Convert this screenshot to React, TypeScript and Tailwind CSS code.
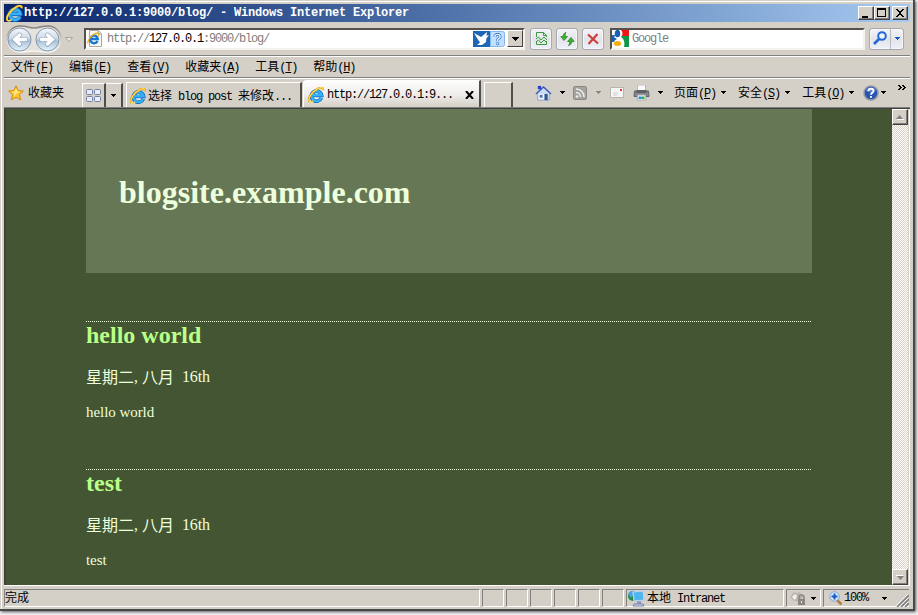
import React from "react";

const latin = "font-['Liberation_Mono','Noto_Sans_CJK_SC',monospace] text-[12px] tracking-[-1.2px]";
const cjk = "font-['Noto_Sans_CJK_SC',sans-serif] text-[12px] tracking-normal";

function Label({ text, className = "" }: { text: string; className?: string }) {
  const parts = text.split(/([\u3000-\u9fff]+|_[A-Z])/).filter(Boolean);
  return (
    <span className={`whitespace-pre leading-[14px] ${latin} ${className}`}>
      {parts.map((p, i) =>
        /[\u3000-\u9fff]/.test(p) ? (
          <span key={i} className={cjk}>{p}</span>
        ) : p[0] === "_" ? (
          <span key={i} className="underline underline-offset-1">{p[1]}</span>
        ) : (
          <span key={i}>{p}</span>
        ),
      )}
    </span>
  );
}

function Down({ className = "" }: { className?: string }) {
  return (
    <svg width="5" height="3" className={`shrink-0 ${className}`} fill="currentColor" shapeRendering="crispEdges">
      <path d="M0 0h5v1H0zM1 1h3v1H1zM2 2h1v1H2z" />
    </svg>
  );
}

function IELogo({ size = 16 }: { size?: number }) {
  return (
    <svg width={size} height={size} viewBox="0 0 16 16" className="shrink-0">
      <circle cx="8.500" cy="8.500" r="4" fill="#fff" opacity=".7" />
      <path d="M13.300 10.900A5.100 5.100 0 1 1 13.600 8.500H5" fill="none" stroke="#0f62bc" strokeWidth="3.700" />
      <path d="M13.200 10.900A5 5 0 1 1 13.500 8.300H5" fill="none" stroke="#35b2f6" strokeWidth="2.500" />
      <path d="M1.600 14.700C-1 12 4 4.500 10 1.600c3-1.400 5.400-1 4.500 1.600" fill="none" stroke="#c4830c" strokeWidth="2.100" />
      <path d="M1.600 14.500C-.8 12 4 4.500 10 1.600c3-1.400 5.200-1 4.500 1.200M1.600 14.500c.8.7 2.200.4 3.600-.6" fill="none" stroke="#ffd84e" strokeWidth="1.500" />
    </svg>
  );
}

function NavArrows() {
  return (
    <svg width="58" height="30" viewBox="0 0 58 30" className="shrink-0">
      <defs>
        <linearGradient id="orb" x2="0" y2="1">
          <stop stopColor="#f6f9fc" /><stop offset=".45" stopColor="#cfd9e5" />
          <stop offset=".55" stopColor="#a9bfd5" /><stop offset="1" stopColor="#e4f7ff" />
        </linearGradient>
        <linearGradient id="tray" x2="0" y2="1">
          <stop stopColor="#85827c" /><stop offset=".5" stopColor="#d0cdc6" /><stop offset="1" stopColor="#f8f7f4" />
        </linearGradient>
      </defs>
      <path d="M15 2c8 0 9 2 14 2s7-2 14-2a13 13 0 0 1 0 26c-7 0-8-1-14-1s-7 1-14 1A13 13 0 0 1 15 2z" fill="#e4e2dd" stroke="url(#tray)" strokeWidth="1.600" />
      <circle cx="14.500" cy="15.500" r="11.500" fill="url(#orb)" stroke="#8496ac" />
      <circle cx="42.500" cy="15.500" r="11.500" fill="url(#orb)" stroke="#8496ac" />
      <g fill="none" stroke="#93a8bf" strokeWidth="4.800" strokeLinecap="round">
        <path d="M14.500 11l-4.700 4.700 4.700 4.700M11 15.700h9.500M42.500 11l4.700 4.700-4.700 4.700M46 15.700h-9.500" />
      </g>
      <g fill="none" stroke="#fff" strokeWidth="3.400" strokeLinecap="round">
        <path d="M14.500 11l-4.700 4.500 4.700 4.500M11 15.500h9.500M42.500 11l4.700 4.500-4.700 4.500M46 15.500h-9.500" />
      </g>
    </svg>
  );
}

function CaptionButton({ children, className = "" }: { children: React.ReactNode; className?: string }) {
  return (
    <div className={`h-[14px] w-4 shrink-0 border border-t-white border-l-white border-r-[#404040] border-b-[#404040] bg-[#d4d0c8] shadow-[inset_-1px_-1px_0_#808080] ${className}`}>
      <svg width="14" height="12" shapeRendering="crispEdges">{children}</svg>
    </div>
  );
}

function TitleBar() {
  return (
    <div className="flex h-[18px] shrink-0 items-center bg-linear-to-r from-[#0a246a] to-[#a6caf0] pr-[2px] pl-[2px]">
      <IELogo size={17} />
      <span className="ml-px flex-1 font-['Liberation_Mono',monospace] text-[12px] leading-[18px] font-bold tracking-[-0.2px] whitespace-pre text-white">
        http://127.0.0.1:9000/blog/ - Windows Internet Explorer
      </span>
      <CaptionButton><path d="M3 9h6v2H3z" /></CaptionButton>
      <CaptionButton><path d="M2 1h9v9H2zM3 3v6h7V3z" fillRule="evenodd" /></CaptionButton>
      <CaptionButton className="ml-[2px]">
        <path d="M3 2h2v1h1v1h2V3h1V2h2v1h-1v1H9v1H8v2h1v1h1v1h1v1H9V9H8V8H6v1H5v1H3V9h1V8h1V7h1V5H5V4H4V3H3z" />
      </CaptionButton>
    </div>
  );
}

const glass = "flex shrink-0 items-center justify-center rounded-[3px] border border-[#a5a8b2] bg-linear-to-b from-[#f4f4f7] via-[#e3e4e9] to-[#eef1f9] shadow-[inset_0_0_0_1px_#f7f7fa]";
const sunken = "flex h-[22px] shrink-0 items-center border-t-2 border-l-2 border-t-[#55524e] border-l-[#55524e] border-r-2 border-b-2 border-r-[#f4f2ee] border-b-[#f4f2ee] bg-white";

function AddressRow() {
  return (
    <div className="flex h-[33px] shrink-0 items-center">
      <div className="ml-px"><NavArrows /></div>
      <svg width="9" height="6" className="mt-[2px] ml-[2px]"><path d="M.5.5h7l-3.500 4z" fill="#ebe8e2" stroke="#aaa69e" /></svg>
      <div className={`${sunken} ml-[10px] w-[441px]`}>
        <svg width="16" height="17" viewBox="0 0 16 17" className="ml-px">
          <path d="M2.500.5h9l3 3v13h-12z" fill="#f8f7f2" stroke="#aaa89f" /><path d="M11 1v3h4" fill="#ddd" stroke="#aaa" />
          <path d="M10.500 11A3.800 3.800 0 1 1 10.800 9H4" fill="none" stroke="#1777d2" strokeWidth="2.300" />
          <path d="M1 13.500C0 10 5 4.500 9 3.500s3 1.500 2 2.500" fill="none" stroke="#eaae20" strokeWidth="1.300" />
        </svg>
        <span className={`ml-[4px] flex-1 whitespace-pre text-[#808080] ${latin}`}>
          http://<span className="text-black">127.0.0.1</span>:9000/blog/
        </span>
        <svg width="32" height="16" viewBox="0 0 32 16">
          <path d="M0 0h17v16H0z" fill="#1d66b5" />
          <path d="M17.500.5h12a2 2 0 0 1 2 2v11a2 2 0 0 1-2 2h-12z" fill="#c4e0ff" stroke="#83b5ee" />
          <path d="M1 2l7 4 6-5-.5 3.500H16L13.500 7l-.5 4-4 3H4l3-2.500L4 7z" fill="#fff" />
          <path d="M22 6V4.800l1.300-1.300h2.400L27 4.800V6.500L24.700 8.500v1.700" fill="none" stroke="#3a7cd0" strokeWidth="2.800" />
          <path d="M22 6V4.800l1.300-1.300h2.400L27 4.800V6.500L24.700 8.500v1.700" fill="none" stroke="#fff" strokeWidth="1.200" />
          <path d="M23.700 11.700h2v2h-2z" fill="#fff" stroke="#3a7cd0" strokeWidth=".8" />
        </svg>
        <div className="ml-[2px] flex h-[17px] w-4 items-center justify-center border border-t-white border-l-white border-r-[#404040] border-b-[#404040] bg-[#d4d0c8]">
          <svg width="7" height="4" shapeRendering="crispEdges"><path d="M0 0h7v1H0zM1 1h5v1H1zM2 2h3v1H2zM3 3h1v1H3z" /></svg>
        </div>
      </div>
      <div className={`${glass} ml-[5px] h-[22px] w-[22px]`}>
        <svg width="13" height="15" viewBox="0 0 13 15" fill="none" stroke="#3a9a3d">
          <path d="M1.500 6V1.500h7L11.500 4.500V6M1.500 10v3.500h10V10M8.500 1.500v3h3" /><path d="M1 8l2.500-2L6 9l3-3 3 3M1 11l2.500-2L6 12l3-3 3 3" />
        </svg>
      </div>
      <div className={`${glass} ml-[4px] h-[22px] w-[22px]`}>
        <svg width="15" height="14" viewBox="0 0 15 14" fill="#41b034" stroke="#217a20" strokeWidth=".7">
          <path d="M6 .5C4 1 3.200 2.500 3.200 4.500H.8L4 8.500l3.500-4H5.200C5.200 3 5.200 1.500 6 .5zM8.500 13.500c2-.5 3.200-2 3.200-4h2.500L11 5.500l-3.500 4h2.300c0 1.500-.4 3-1.300 4z" />
        </svg>
      </div>
      <div className={`${glass} ml-[4px] h-[22px] w-[22px]`}>
        <svg width="12" height="12" viewBox="0 0 12 12"><path d="M1 1.500l10 9M10.500 1L1.500 11" stroke="#cf3d3f" strokeWidth="2.200" /></svg>
      </div>
      <div className={`${sunken} ml-[6px] w-[255px]`}>
        <svg width="17" height="17" viewBox="0 0 17 17">
          <path d="M9 0h8v6H7z" fill="#f01614" /><path d="M8 6h9v11H9z" fill="#109747" /><path d="M0 5h4v7H0z" fill="#2164b4" />
          <path d="M2 0h7c2 2 2 5 0 7 3 2 4 5 3 10H0v-4l3-2-2-3 2-2z" fill="#fff" />
          <ellipse cx="5.500" cy="3.500" rx="2.800" ry="3.700" fill="#1660b0" /><path d="M0 6l5 3-5 3z" fill="#1660b0" /><ellipse cx="5.500" cy="13.500" rx="3.700" ry="2.500" fill="#f4ae10" />
        </svg>
        <span className={`ml-[3px] text-[#808080] ${latin}`}>Google</span>
      </div>
      <div className={`${glass} ml-[4px] h-[22px] w-[35px]`}>
        <svg width="21" height="20" viewBox="0 0 20 20" className="border-r border-[#b9bbc3]">
          <circle cx="12" cy="7" r="3.800" fill="#edf6ff" stroke="#2467d8" strokeWidth="2" /><path d="M9 10l-5 5" stroke="#2467d8" strokeWidth="2.600" />
        </svg>
        <div className="flex flex-1 justify-center text-[#1558c8]"><Down /></div>
      </div>
    </div>
  );
}

const ridge = "border-t border-[#808080] shadow-[inset_0_1px_0_#fff]";

function MenuRow() {
  const menus = ["文件(_F)", "编辑(_E)", "查看(_V)", "收藏夹(_A)", "工具(_T)", "帮助(_H)"];
  return (
    <div className={`flex h-[22px] shrink-0 items-center gap-4 pt-px pl-[7px] ${ridge}`}>
      {menus.map((m) => <Label key={m} text={m} />)}
    </div>
  );
}

function Feed() {
  return (
    <svg width="14" height="14" viewBox="0 0 14 14">
      <rect x=".5" y=".5" width="13" height="13" rx="1.500" fill="#a5a39e" stroke="#8c8984" />
      <circle cx="4" cy="10.500" r="1.300" fill="#eee" /><path d="M3 6.500a4.500 4.500 0 0 1 4.500 4.500M3 3a8 8 0 0 1 8 8" fill="none" stroke="#eee" strokeWidth="1.500" />
    </svg>
  );
}

function TabRow() {
  return (
    <div className={`flex h-[31px] shrink-0 border-b ${ridge}`}>
      <div className="flex w-[78px] items-center pb-px pl-[4px]">
        <svg width="16" height="16" viewBox="0 0 16 16" className="mt-[2px]">
          <path d="M8 .8l2.200 4.700 5.200.6-3.900 3.500 1.200 5.300L8 12.300l-4.700 2.600 1.200-5.300L.6 6.100l5.200-.6z" fill="#ffc62c" stroke="#d68b10" />
          <path d="M8 3l1.400 3.200 3 .5-3.500 1.500L6 12l.2-3.500L3.500 7l3-.6z" fill="#fff2a0" opacity=".75" />
        </svg>
        <Label text="收藏夹" className="mt-[2px] ml-[4px]" />
      </div>
      <div className="mt-[5px] flex w-[24px] items-center justify-center border-t border-r-2 border-l border-t-white border-l-white border-r-[#504e4b]">
        <svg width="16" height="13" viewBox="0 0 16 13" fill="#e9edf7" stroke="#7280a5">
          <rect x=".5" y=".5" width="6" height="5" rx="1" /><rect x="8.500" y=".5" width="6" height="5" rx="1" />
          <rect x=".5" y="7.500" width="6" height="5" rx="1" /><rect x="8.500" y="7.500" width="6" height="5" rx="1" />
        </svg>
      </div>
      <div className="mt-[5px] flex w-[17px] items-center justify-center border-t border-r-2 border-t-white border-r-[#504e4b]"><Down /></div>
      <div className="mt-[4px] ml-[3px] flex w-[176px] items-center border-t border-r-2 border-l border-t-white border-l-white border-r-[#504e4b] pt-px pl-[3px]">
        <IELogo /><Label text="选择 blog post 来修改..." className="ml-[2px]" />
      </div>
      <div className="mt-[2px] ml-px flex w-[178px] items-center rounded-tl-sm border-t border-r-2 border-l border-t-white border-l-white border-r-[#504e4b] bg-linear-to-b from-[#fdfdfc] via-[#f0eeeb] to-[#d4d0c8] pt-px pl-[4px]">
        <IELogo /><Label text="http://127.0.0.1:9..." className="ml-[3px]" />
        <svg width="9" height="8" className="mt-px ml-[12px]"><path d="M1 0l7 8M8 0L1 8" stroke="#000" strokeWidth="2" /></svg>
      </div>
      <div className="mt-[4px] ml-[3px] w-[29px] border-t border-r-2 border-l border-t-white border-l-white border-r-[#504e4b]" />
      <div className="mt-[4px] ml-[22px] flex h-[21px] flex-1 items-center">
        <svg width="17" height="18" viewBox="0 0 18 18">
          <path d="M3 8h12v8.500H3z" fill="#f2f6ff" stroke="#8b9dc4" /><path d="M1 10l8-7.500L17 10" fill="#c9d8f4" stroke="#3a5cae" strokeWidth="1.500" />
          <path d="M3 1.500h3.500v3.500H3z" fill="#2340d0" /><path d="M10 10h3.500v6.500H10z" fill="#30588e" /><path d="M5 11h3v3H5z" fill="#516eac" />
        </svg>
        <Down className="ml-[8px]" />
        <div className="ml-[8px]"><Feed /></div>
        <Down className="ml-[9px] text-[#898680]" />
        <svg width="14" height="11" viewBox="0 0 14 11" className="ml-[9px]"><path d="M.5.5h13v10H.5z" fill="#f7f6f4" stroke="#b7b4ad" /><path d="M10 2h2v2h-2z" fill="#ef3030" /><path d="M3 6h5M3 8h4" stroke="#ccc" /></svg>
        <svg width="17" height="16" viewBox="0 0 16 16" className="ml-[9px]">
          <path d="M4 0h8v7H4z" fill="#fafafa" stroke="#bbb" /><path d="M1 6h14l.5 5.500H.5z" fill="#83868c" stroke="#616469" /><path d="M3 5h10v3H3z" fill="#5c5f65" />
          <path d="M4 10h8l.5 5h-9z" fill="#fff" stroke="#aaa" /><path d="M5 11.500h3v2.500H5z" fill="#248bda" /><path d="M8 11.500h3v2.500H8z" fill="#31a552" />
        </svg>
        <Down className="ml-[8px]" />
        <Label text="页面(_P)" className="ml-[11px]" /><Down className="ml-[5px]" />
        <Label text="安全(_S)" className="ml-[12px]" /><Down className="ml-[5px]" />
        <Label text="工具(_O)" className="ml-[12px]" /><Down className="ml-[5px]" />
        <svg width="16" height="16" viewBox="0 0 16 16" className="ml-[9px]">
          <circle cx="8" cy="8" r="7" fill="#2855b2" stroke="#9298a7" strokeWidth="1.500" /><path d="M3 5a6 5 0 0 1 10 0l-2 2H4z" fill="#8eafe5" opacity=".5" />
          <path d="M5.500 6c0-3 5-3 5 0 0 1.800-2.500 1.500-2.500 3.700M8 11v1.800" fill="none" stroke="#fff" strokeWidth="1.900" />
        </svg>
        <Down className="ml-[2px]" />
        <svg width="9" height="5" className="mb-[11px] ml-[12px]" shapeRendering="crispEdges"><path d="M0 0h2v1h1v1h1v1H3v1H2v1H0V4h1V3h1V2H1V1H0zM4 0h2v1h1v1h1v1H7v1H6v1H4V4h1V3h1V2H5V1H4z" /></svg>
      </div>
    </div>
  );
}

function ScrollButton({ up = false }: { up?: boolean }) {
  return (
    <div className="flex h-4 w-4 items-center justify-center border border-t-white border-l-white border-r-[#404040] border-b-[#404040] bg-[#d4d0c8] shadow-[inset_-1px_-1px_0_#808080]">
      <svg width="8" height="5" className={up ? "" : "rotate-180"}><path d="M0 4h7L3.500 0z" fill="#808080" /><path d="M1 4.500h7" stroke="#fff" /></svg>
    </div>
  );
}

function Post({ title, body }: { title: string; body: string }) {
  return (
    <article className="mt-12 h-[100px] w-[726px]">
      <svg width="726" height="1" className="block"><path d="M0 .5h726" stroke="#eeffdd" strokeDasharray="1 1" shapeRendering="crispEdges" /></svg>
      <h2 className="text-[24px] leading-[26px] font-bold text-[#bbff88]">{title}</h2>
      <p className="mt-[20px] flex h-[18px] items-center text-[16px] leading-[18px] whitespace-pre">
        <span className="pb-[3px] font-['Noto_Sans_CJK_SC',sans-serif]">星期二</span>
        <span className="w-[8px]">,</span>
        <span className="pb-[3px] font-['Noto_Sans_CJK_SC',sans-serif]">八月</span>
        <span className="ml-[8px] tracking-[-0.2px]">16th</span>
      </p>
      <p className="mt-[17px] text-[15px] leading-[18px] tracking-[-0.05px]">{body}</p>
    </article>
  );
}

function Page() {
  return (
    <div className="flex h-[477px] shrink-0 border-t border-l-2 border-t-[#404040] border-l-[#404040] bg-[#445533]">
      <main className="min-w-0 flex-1 overflow-hidden pl-[80px] font-['Liberation_Serif',serif] text-[#eeffdd]">
        <header className="h-[164px] w-[726px] bg-[#667755] pt-[65px] pl-[33px]">
          <h1 className="text-[32px] leading-[37px] font-bold">blogsite.example.com</h1>
        </header>
        <Post title="hello world" body="hello world" />
        <Post title="test" body="test" />
      </main>
      <div className="flex w-4 flex-col justify-between bg-[#eae8e4] bg-[conic-gradient(#fff_25%,#d4d0c8_0_50%,#fff_0_75%,#d4d0c8_0)] bg-size-[2px_2px]">
        <ScrollButton up /><ScrollButton />
      </div>
      <div className="w-[2px] border-r border-white bg-[#d4d0c8]" />
    </div>
  );
}

const panel = "flex h-[18px] shrink-0 items-center border border-t-[#808080] border-l-[#808080] border-r-white border-b-white";

function StatusBar() {
  return (
    <div className="flex h-[23px] shrink-0 gap-[2px] border-t border-white pt-[3px]">
      <div className={`${panel} w-[476px]`}><Label text="完成" /></div>
      {[0, 1, 2, 3, 4, 5].map((n) => <div key={n} className={`${panel} w-[22px]`} />)}
      <div className={`${panel} w-[158px]`}>
        <svg width="17" height="17" viewBox="0 0 17 17" className="ml-px">
          <circle cx="5" cy="6" r="5" fill="#268a49" /><path d="M0 4c2-4 6-4 7-2L3 8z" fill="#4aa5e0" />
          <path d="M5 2l10-1 1 9-10 1z" fill="#4fb4f2" stroke="#c3d3e8" strokeWidth="1.200" /><path d="M9 11h4v3H9z" fill="#8f9fbd" /><path d="M6 14h9l1 2H5z" fill="#dce1ec" stroke="#5f70a0" strokeWidth=".9" />
        </svg>
        <Label text="本地 Intranet" className="ml-[2px]" />
      </div>
      <div className={`${panel} w-[35px]`}>
        <svg width="16" height="15" viewBox="0 0 16 15" className="ml-[3px]">
          <path d="M0 6l4-5 3 1 3-1 3 5-3 5-6-1z" fill="#bab7b2" /><path d="M2 6l3-3 2 2-2 4z" fill="#f4f2ed" />
          <path d="M9 8V6.500a2.500 2.500 0 0 1 5 0V8" fill="none" stroke="#8a8680" strokeWidth="1.500" /><path d="M8 8h7v6H8z" fill="#8a8680" /><path d="M11 10h1v2h-1z" fill="#eee" />
        </svg>
        <Down className="ml-[5px]" />
      </div>
      <div className={`${panel} w-[86px] border-r-0`}>
        <svg width="14" height="15" viewBox="0 0 14 15" className="ml-[5px]">
          <path d="M8 9l4.500 4.500" stroke="#b57c44" strokeWidth="2.600" /><circle cx="5.500" cy="5.500" r="4.700" fill="#d8ecff" stroke="#7ca2d2" /><path d="M5.500 2.500v6M2.500 5.500h6" stroke="#1558c0" strokeWidth="2" />
        </svg>
        <Label text="100%" className="ml-px" /><Down className="ml-[14px]" />
        <svg width="13" height="13" viewBox="0 0 13 13" className="mt-[4px] ml-auto"><path d="M1 13L13 1M5 13l8-8M9 13l4-4" stroke="#808080" strokeWidth="1.700" /><path d="M0 12L12 0M4 12l8-8M8 12l4-4" stroke="#fff" strokeWidth=".8" /></svg>
      </div>
    </div>
  );
}

export default function App() {
  return (
    <div className="h-[615px] w-[918px] overflow-hidden bg-[#f4f4f4]">
      <div className="flex h-[611px] w-[915px] flex-col border-r-2 border-b-2 border-[#48484b] bg-[#d4d0c8] pt-[4px] pr-[3px] pl-[4px] shadow-[inset_1px_1px_0_#d4d0c8,inset_2px_2px_0_#fff,1px_1px_3px_#555]">
        <TitleBar />
        <AddressRow />
        <MenuRow />
        <TabRow />
        <Page />
        <StatusBar />
      </div>
    </div>
  );
}
